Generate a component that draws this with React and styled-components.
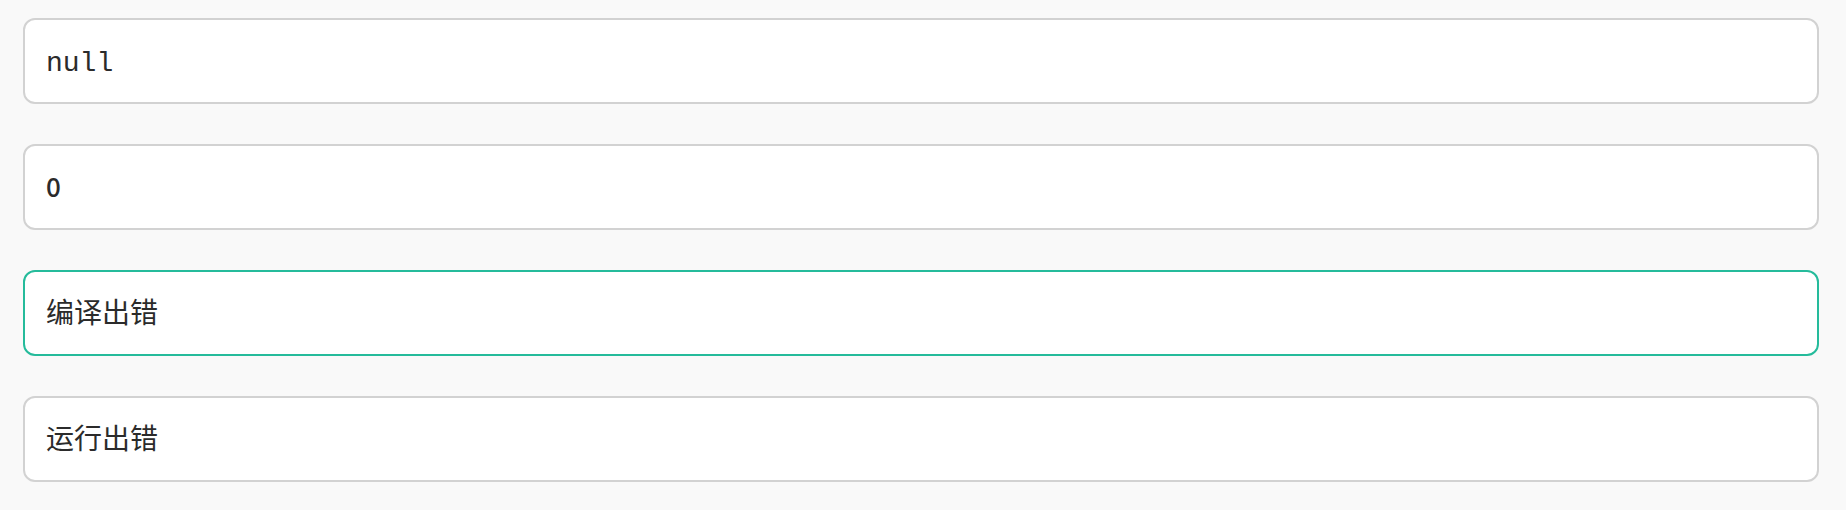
import React, { useState } from "react";
import styled, { createGlobalStyle, css } from "styled-components";

const GlobalStyle = createGlobalStyle`
  * { box-sizing: border-box; }
  body {
    margin: 0;
    background: #f9f9f9;
    color: #2b2b2b;
    font-family: "Noto Sans CJK SC", sans-serif;
  }
`;

const OptionList = styled.fieldset`
  display: flex;
  flex-direction: column;
  gap: 40px;
  min-width: 0;
  margin: 0;
  padding: 18px 27px 28px 23px;
  border: 0;
`;

const Option = styled.label`
  display: flex;
  align-items: center;
  padding: 18px 21px 22px;
  background: #fff;
  border: 2px solid #d2d2d2;
  border-radius: 12px;
  cursor: pointer;

  &:has(input:checked) {
    border-color: #25bb9b;
  }
`;

const Radio = styled.input`
  appearance: none;
  width: 0;
  height: 0;
  margin: 0;
  outline: none;
`;

const OptionText = styled.div`
  height: 42px;
  font-size: 28px;
  line-height: 42px;
`;

const fonts = {
  code: css`
    font-family: "Liberation Mono", monospace;
  `,
  number: css`
    font-size: 26px;
    font-weight: 500;
  `,
  text: css`
    font-weight: 400;
  `,
};

const Answer = styled.span`
  ${({ $kind }) => fonts[$kind]}
`;

const options = [
  { id: "a", kind: "code", text: "null" },
  { id: "b", kind: "number", text: "0" },
  { id: "c", kind: "text", text: "编译出错" },
  { id: "d", kind: "text", text: "运行出错" },
];

export default function App() {
  const [selected, setSelected] = useState("c");
  return (
    <>
      <GlobalStyle />
      <OptionList>
        {options.map(({ id, kind, text }) => (
          <Option key={id} htmlFor={id}>
            <Radio
              type="radio"
              name="answer"
              id={id}
              checked={selected === id}
              onChange={() => setSelected(id)}
            />
            <OptionText>
              <Answer $kind={kind}>{text}</Answer>
            </OptionText>
          </Option>
        ))}
      </OptionList>
    </>
  );
}
